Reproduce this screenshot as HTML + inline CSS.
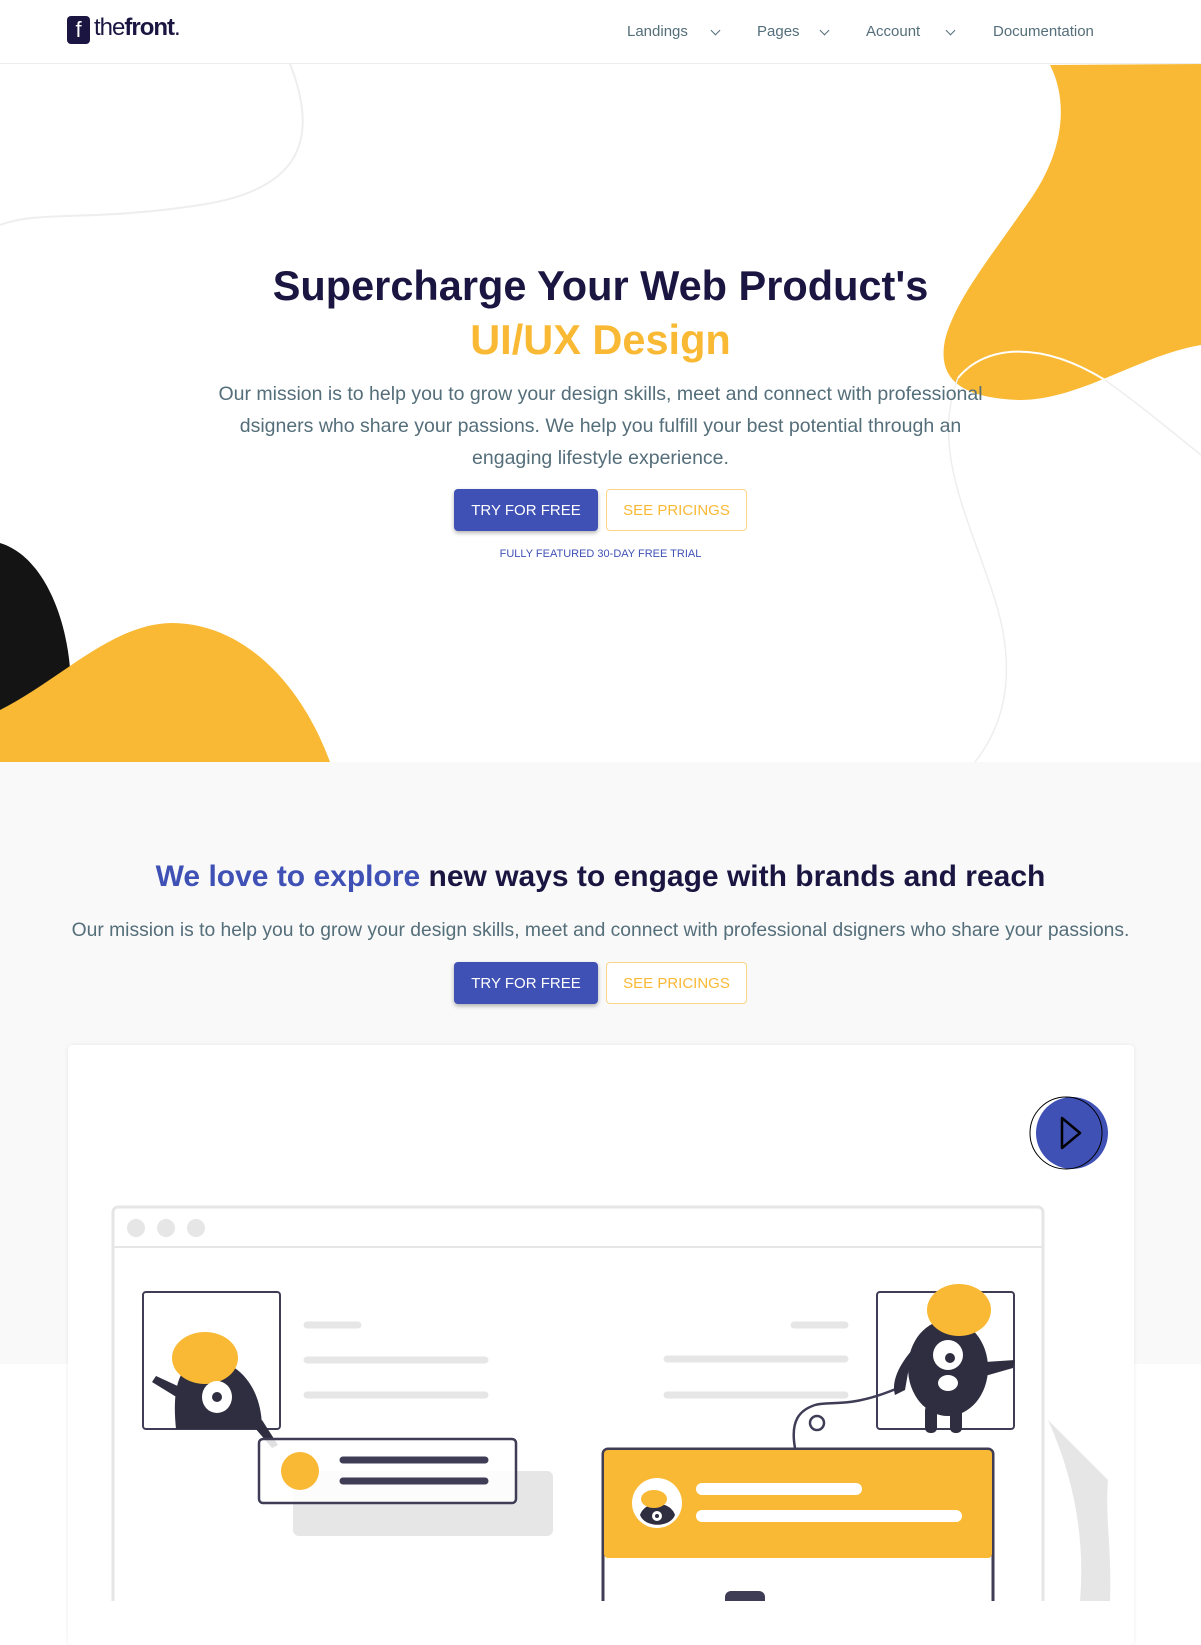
<!DOCTYPE html>
<html><head><meta charset="utf-8"><style>
*{margin:0;padding:0;box-sizing:border-box}
body{width:1201px;height:1601px;overflow:hidden;background:#fff;font-family:"Liberation Sans",sans-serif;position:relative}
.abs{position:absolute}
.nav{position:absolute;top:0;left:0;width:1201px;height:64px;border-bottom:1px solid #eee;background:#fff;z-index:5}
.nav span{position:absolute;top:23px;font-size:15px;color:#546e7a}
.chev{position:absolute;top:27px;width:7px;height:7px;border-right:1.6px solid #546e7a;border-bottom:1.6px solid #546e7a;transform:rotate(45deg)}
.c{position:absolute;left:0;width:1201px;text-align:center}
.btn{position:absolute;height:42px;font-size:15px;display:flex;align-items:center;justify-content:center;border-radius:4px}
.b1{background:#3f51b5;color:#fff;box-shadow:0 2px 4px rgba(0,0,0,.3)}
.b2{border:1px solid #fcd486;color:#f9b934;background:#fff}
</style></head><body>
<svg class="abs" style="left:0;top:64px" width="1201" height="698" viewBox="0 64 1201 698">
<path d="M290 64 C320 140 300 190 200 205 C90 222 40 210 0 225" fill="none" stroke="#eee" stroke-width="2"/>
<path d="M1050 65 C1068 100 1065 150 1030 200 C990 258 955 300 945 340 C938 375 955 398 1020 400 C1080 400 1140 355 1201 345 L1201 64 Z" fill="#f9b934"/>
<path d="M958 378 C985 345 1040 340 1105 380 C1140 405 1170 430 1201 455" fill="none" stroke="#fff" stroke-width="2"/>
<path d="M1105 380 C1140 405 1170 430 1201 455" fill="none" stroke="#eee" stroke-width="1.5"/>
<path d="M958 378 C930 450 970 520 995 600 C1020 680 1000 730 975 762" fill="none" stroke="#eee" stroke-width="1.5"/>
<path d="M0 543 C40 555 65 610 70 668 L0 712 Z" fill="#141414"/>
<path d="M0 710 C60 680 110 625 170 623 C240 622 300 680 330 762 L0 762 Z" fill="#f9b934"/>
</svg>
<div class="nav">
<div class="abs" style="left:67px;top:16px;width:23px;height:28px;background:#1a1641;border-radius:4px;color:#fff;font-size:22px;text-align:center;line-height:28px">f</div>
<div class="abs" style="left:94px;top:14px;font-size:24px;color:#1a1641;letter-spacing:-1px">the<b>front</b>.</div>
<span style="left:627px">Landings</span><i class="chev" style="left:712px"></i>
<span style="left:757px">Pages</span><i class="chev" style="left:821px"></i>
<span style="left:866px">Account</span><i class="chev" style="left:947px"></i>
<span style="left:993px">Documentation</span>
</div>
<div class="c" style="top:259px;font-size:41.5px;font-weight:bold;color:#1a1641;line-height:54px">Supercharge Your Web Product's<br><span style="color:#f9b934">UI/UX Design</span></div>
<div class="c" style="top:378px;font-size:19.5px;color:#546e7a;line-height:32px">Our mission is to help you to grow your design skills, meet and connect with professional<br>dsigners who share your passions. We help you fulfill your best potential through an<br>engaging lifestyle experience.</div>
<div class="btn b1" style="left:454px;top:489px;width:144px">TRY FOR FREE</div>
<div class="btn b2" style="left:606px;top:489px;width:141px">SEE PRICINGS</div>
<div class="c" style="top:548px;font-size:11px;color:#3f51b5">FULLY FEATURED 30-DAY FREE TRIAL</div>
<div class="abs" style="left:0;top:762px;width:1201px;height:602px;background:#f9f9f9"></div>
<div class="c" style="top:860px;font-size:30px;font-weight:bold;color:#1a1641"><span style="color:#3f51b5">We love to explore</span> new ways to engage with brands and reach</div>
<div class="c" style="top:920px;font-size:19.3px;color:#546e7a">Our mission is to help you to grow your design skills, meet and connect with professional dsigners who share your passions.</div>
<div class="btn b1" style="left:454px;top:962px;width:144px">TRY FOR FREE</div>
<div class="btn b2" style="left:606px;top:962px;width:141px">SEE PRICINGS</div>
<div class="abs" style="left:68px;top:1045px;width:1066px;height:600px;background:#fff;border-radius:4px;box-shadow:0 0 4px rgba(0,0,0,.08)"></div>
<svg class="abs" style="left:0;top:1045px" width="1201" height="556" viewBox="0 1045 1201 556">
<path d="M1048 1420 C1075 1480 1085 1540 1080 1601 L1110 1601 C1112 1550 1105 1520 1108 1480 Z" fill="#e6e6e6"/>
<path d="M128 1601 C130 1580 135 1565 140 1560 L135 1601 Z" fill="#e6e6e6"/>
<rect x="113" y="1207" width="930" height="420" rx="5" fill="#fff" stroke="#e6e6e6" stroke-width="3"/>
<line x1="113" y1="1247" x2="1043" y2="1247" stroke="#e6e6e6" stroke-width="2"/>
<circle cx="136" cy="1228" r="9" fill="#e6e6e6"/><circle cx="166" cy="1228" r="9" fill="#e6e6e6"/><circle cx="196" cy="1228" r="9" fill="#e6e6e6"/>
<g stroke="#e6e6e6" stroke-width="7" stroke-linecap="round">
<line x1="307" y1="1325" x2="358" y2="1325"/><line x1="307" y1="1360" x2="485" y2="1360"/><line x1="307" y1="1395" x2="485" y2="1395"/>
<line x1="794" y1="1325" x2="845" y2="1325"/><line x1="667" y1="1359" x2="845" y2="1359"/><line x1="667" y1="1395" x2="845" y2="1395"/></g>
<rect x="143" y="1292" width="137" height="137" rx="3" fill="#fff" stroke="#3f3d56" stroke-width="2"/>
<path d="M176 1429 C172 1390 178 1365 200 1360 C230 1355 262 1380 262 1429 Z" fill="#2f2e41"/>
<path d="M178 1398 L152 1382 L156 1376 L182 1388 Z" fill="#2f2e41"/>
<path d="M262 1420 L278 1445 L272 1448 L255 1428 Z" fill="#2f2e41"/>
<ellipse cx="205" cy="1358" rx="33" ry="26" fill="#f9b934"/>
<ellipse cx="217" cy="1397" rx="15" ry="16" fill="#fff"/><circle cx="217" cy="1397" r="5" fill="#2f2e41"/>
<rect x="293" y="1471" width="260" height="65" rx="6" fill="#e6e6e6"/>
<rect x="259" y="1439" width="257" height="64" rx="4" fill="#fff" fill-opacity=".85" stroke="#3f3d56" stroke-width="2.5"/>
<circle cx="300" cy="1471" r="19" fill="#f9b934"/>
<g stroke="#3f3d56" stroke-width="7" stroke-linecap="round"><line x1="343" y1="1460" x2="485" y2="1460"/><line x1="343" y1="1481" x2="485" y2="1481"/></g>
<rect x="877" y="1292" width="137" height="137" rx="3" fill="#fff" stroke="#3f3d56" stroke-width="2"/>
<path d="M795 1448 C790 1420 800 1410 815 1405 C830 1400 850 1410 905 1385" fill="none" stroke="#3f3d56" stroke-width="2.5"/>
<circle cx="817" cy="1423" r="7" fill="none" stroke="#3f3d56" stroke-width="2.5"/>
<ellipse cx="948" cy="1368" rx="40" ry="48" fill="#2f2e41"/>
<path d="M985 1362 L1015 1360 L1013 1368 L985 1376 Z" fill="#2f2e41"/>
<path d="M912 1350 C895 1370 892 1385 895 1395 L905 1390 Z" fill="#2f2e41"/>
<rect x="925" y="1405" width="12" height="28" rx="5" fill="#2f2e41"/><rect x="950" y="1405" width="12" height="28" rx="5" fill="#2f2e41"/>
<ellipse cx="959" cy="1310" rx="32" ry="26" fill="#f9b934"/>
<ellipse cx="948" cy="1355" rx="15" ry="15" fill="#fff"/><circle cx="950" cy="1358" r="5" fill="#2f2e41"/>
<ellipse cx="948" cy="1383" rx="10" ry="8" fill="#fff"/>
<rect x="603" y="1449" width="390" height="200" rx="5" fill="#fff" stroke="#3f3d56" stroke-width="3"/>
<rect x="604" y="1450" width="388" height="108" rx="4" fill="#f9b934"/>
<circle cx="657" cy="1503" r="25" fill="#fff"/>
<path d="M640 1515 C645 1500 670 1500 675 1515 C670 1528 645 1528 640 1515Z" fill="#2f2e41"/>
<ellipse cx="654" cy="1499" rx="13" ry="9" fill="#f9b934"/><circle cx="657" cy="1516" r="5" fill="#fff"/><circle cx="657" cy="1516" r="2" fill="#2f2e41"/>
<g stroke="#fff" stroke-width="12" stroke-linecap="round"><line x1="702" y1="1489" x2="856" y2="1489"/><line x1="702" y1="1516" x2="956" y2="1516"/></g>
<rect x="725" y="1591" width="40" height="20" rx="6" fill="#3f3d56"/>
<circle cx="1072" cy="1133" r="36" fill="#3f51b5"/>
<circle cx="1066" cy="1133" r="36" fill="none" stroke="#000" stroke-width="1"/>
<path d="M1062 1118 L1080 1133 L1062 1148 Z" fill="none" stroke="#000" stroke-width="2.5" stroke-linejoin="round"/>
</svg>
</body></html>
